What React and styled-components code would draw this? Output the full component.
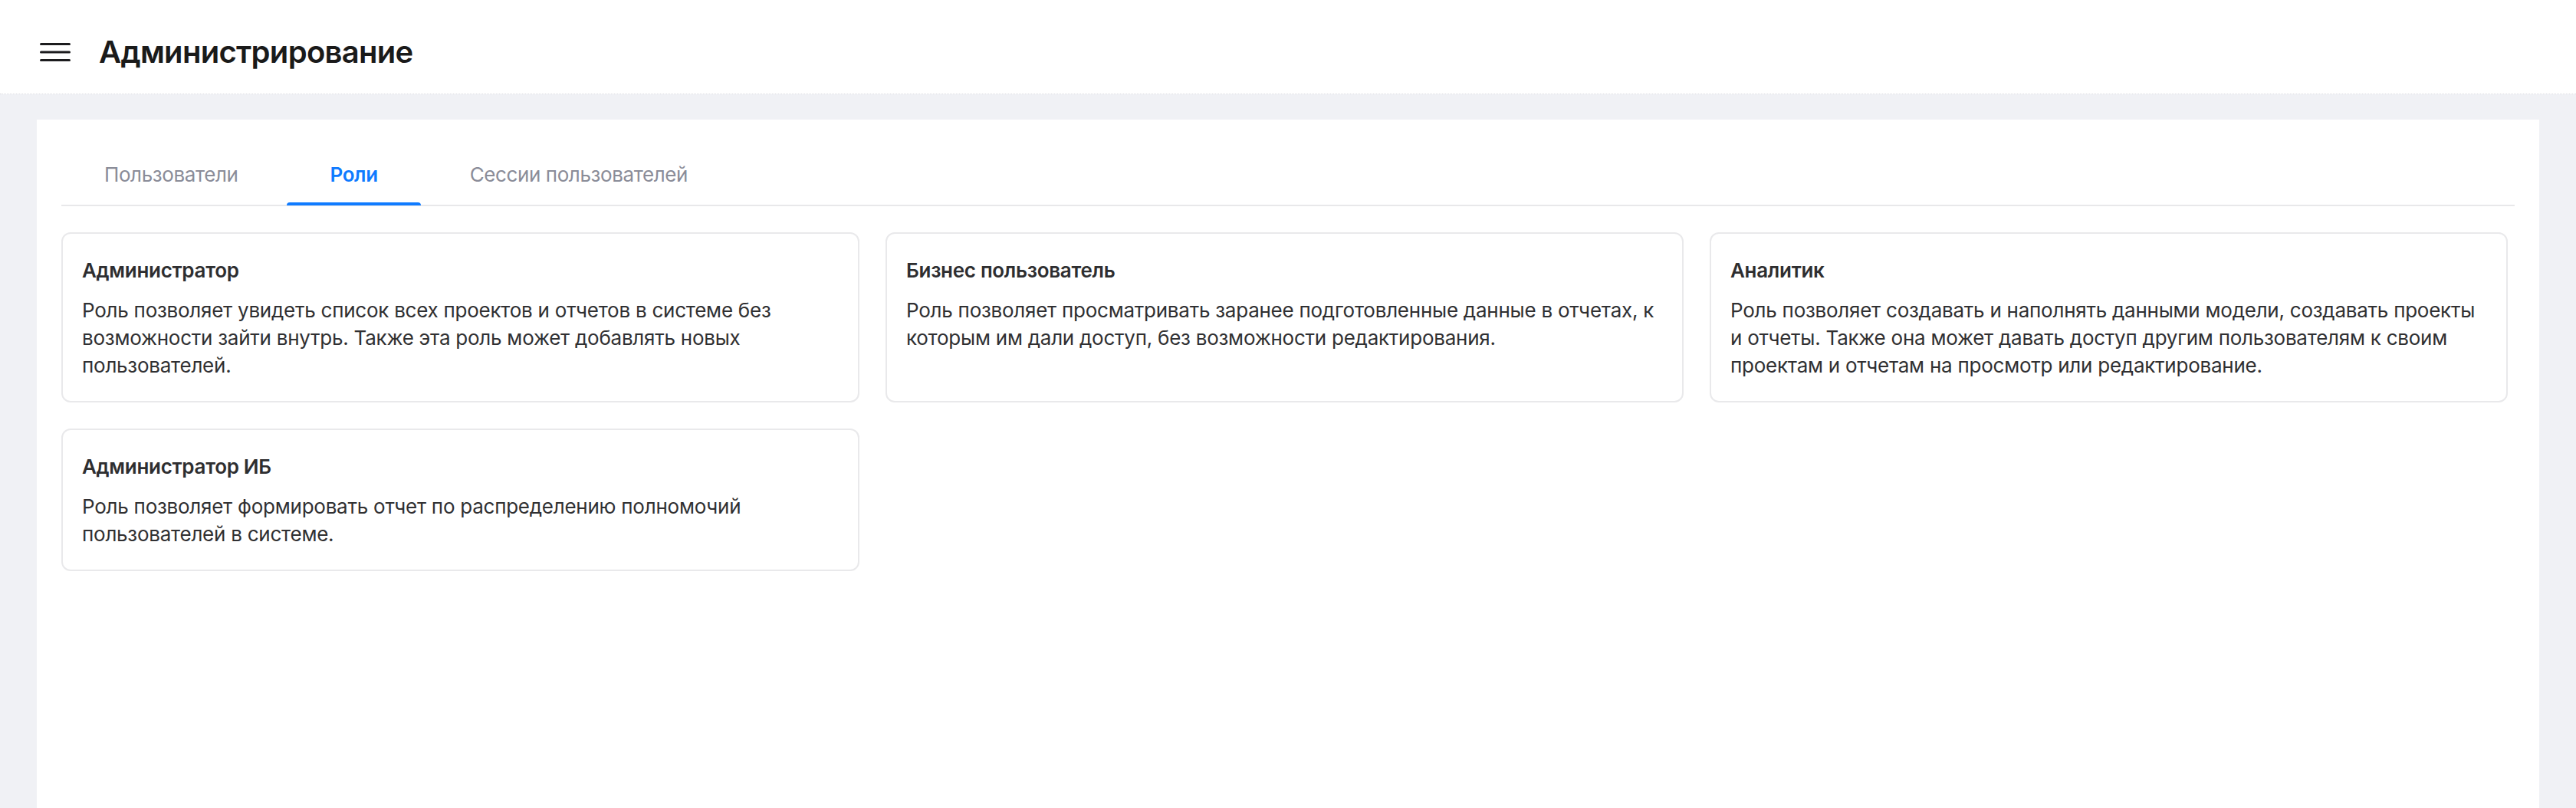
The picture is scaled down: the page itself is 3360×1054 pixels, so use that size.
import React, { useState } from 'react';
import styled, { createGlobalStyle } from 'styled-components';

const roles = [
  {
    id: 'admin',
    title: 'Администратор',
    text: 'Роль позволяет увидеть список всех проектов и отчетов в системе без возможности зайти внутрь. Также эта роль может добавлять новых пользователей.',
  },
  {
    id: 'business',
    title: 'Бизнес пользователь',
    text: 'Роль позволяет просматривать заранее подготовленные данные в отчетах, к которым им дали доступ, без возможности редактирования.',
  },
  {
    id: 'analyst',
    title: 'Аналитик',
    text: 'Роль позволяет создавать и наполнять данными модели, создавать проекты и отчеты. Также она может давать доступ другим пользователям к своим проектам и отчетам на просмотр или редактирование.',
  },
  {
    id: 'security',
    title: 'Администратор ИБ',
    text: 'Роль позволяет формировать отчет по распределению полномочий пользователей в системе.',
  },
];

const tabs = ['Пользователи', 'Роли', 'Сессии пользователей'];

const App = () => {
  const [activeTab, setActiveTab] = useState('Роли');

  return (
    <>
      <GlobalStyle />
      <Page>
        <Header>
          <MenuButton aria-label="Меню">
            <svg width="40" height="24" viewBox="0 0 40 24" fill="none">
              <path d="M1.5 1.5h37M1.5 12h37M1.5 22.5h37" stroke="#1c1c1e" strokeWidth="3" strokeLinecap="round" />
            </svg>
          </MenuButton>
          <PageTitle>Администрирование</PageTitle>
        </Header>
        <Content>
          <Panel>
            <TabList>
              {tabs.map((tab) => (
                <Tab key={tab} $active={tab === activeTab} onClick={() => setActiveTab(tab)}>
                  {tab}
                </Tab>
              ))}
            </TabList>
            <RoleGrid>
              {roles.map((role) => (
                <RoleCard key={role.id}>
                  <RoleTitle>{role.title}</RoleTitle>
                  <RoleText>{role.text}</RoleText>
                </RoleCard>
              ))}
            </RoleGrid>
          </Panel>
        </Content>
      </Page>
    </>
  );
};

export default App;

const GlobalStyle = createGlobalStyle`
  * {
    box-sizing: border-box;
  }

  body {
    margin: 0;
    font-family: Inter, 'Noto Sans', sans-serif;
    background: #f0f1f5;
  }
`;

const Page = styled.div`
  display: flex;
  flex-direction: column;
  min-height: 100vh;
`;

const Header = styled.header`
  display: flex;
  align-items: center;
  gap: 37px;
  height: 123px;
  padding: 14px 0 0 52px;
  background: #fff;
  border-bottom: 1px dotted #dcdde2;
`;

const MenuButton = styled.button`
  display: flex;
  padding: 0;
  border: none;
  background: none;
  cursor: pointer;
`;

const PageTitle = styled.h1`
  margin: 0;
  font-size: 40px;
  line-height: 48px;
  font-weight: 600;
  color: #1a1a1a;
  letter-spacing: -0.7px;
`;

const Content = styled.main`
  flex: 1;
  display: flex;
  padding: 33px 48px 0;
`;

const Panel = styled.section`
  flex: 1;
  padding: 52px 32px 32px;
  background: #fff;
`;

const TabList = styled.nav`
  display: flex;
  gap: 8px;
  border-bottom: 2px solid #e8e8ea;
`;

const Tab = styled.button`
  position: relative;
  padding: 0 56px 19px;
  border: none;
  background: none;
  font-family: inherit;
  font-size: 26px;
  line-height: 40px;
  letter-spacing: -0.4px;
  font-weight: ${({ $active }) => ($active ? 600 : 400)};
  color: ${({ $active }) => ($active ? '#0f7bff' : '#8a8c98')};
  cursor: pointer;

  &::after {
    content: '';
    position: absolute;
    left: 0;
    right: 0;
    bottom: -1px;
    height: 4px;
    border-radius: 4px 4px 0 0;
    background: ${({ $active }) => ($active ? '#0f7bff' : 'transparent')};
  }
`;

const RoleGrid = styled.div`
  display: grid;
  grid-template-columns: repeat(3, 1fr);
  gap: 34px;
  margin: 34px 9px 0 0;
`;

const RoleCard = styled.article`
  padding: 30px 25px 28px;
  border: 2px solid #e9e9eb;
  border-radius: 12px;
  background: #fff;
`;

const RoleTitle = styled.h3`
  margin: 0 0 16px;
  font-size: 26px;
  line-height: 36px;
  font-weight: 600;
  letter-spacing: -0.3px;
  color: #2e2e30;
`;

const RoleText = styled.p`
  margin: 0;
  font-size: 26px;
  line-height: 36px;
  letter-spacing: -0.25px;
  color: #303032;
`;
